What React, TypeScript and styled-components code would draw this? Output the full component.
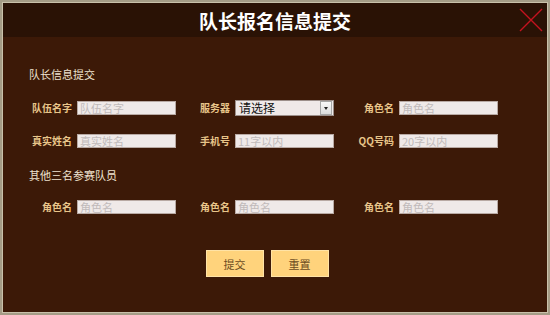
import styled, { createGlobalStyle } from "styled-components";

const GlobalStyle = createGlobalStyle`
  html, body {
    margin: 0;
    padding: 0;
    background: #a49c86;
    font-family: "Noto Sans CJK SC", "Liberation Sans", sans-serif;
  }
`;

const Page = styled.div`
  width: 550px;
  height: 315px;
  padding: 3px;
  box-sizing: border-box;
  background: #a49c86;
`;

const Modal = styled.div`
  width: 544px;
  height: 309px;
  background: #3c1907;
  box-shadow: 0 0 0 1px #c9c1aa;
  display: flex;
  flex-direction: column;
`;

const Header = styled.div`
  position: relative;
  height: 34px;
  background: #2a1205;
  display: flex;
  align-items: center;
  justify-content: center;
`;

const Title = styled.h1`
  margin: 0;
  padding-top: 2px;
  font-size: 19px;
  font-weight: bold;
  color: #ffffff;
  line-height: 32px;
`;

const Close = styled.button`
  position: absolute;
  right: 4px;
  top: 5px;
  width: 24px;
  height: 24px;
  padding: 0;
  border: none;
  background: transparent;
  cursor: pointer;
`;

const Body = styled.div`
  padding: 30px 0 0 17px;
  display: flex;
  flex-direction: column;
`;

const SectionTitle = styled.div<{ $top: number }>`
  margin-top: ${(p) => p.$top}px;
  padding-left: 9px;
  font-size: 11px;
  line-height: 14px;
  color: #efe3d0;
`;

const Row = styled.div<{ $top: number }>`
  margin-top: ${(p) => p.$top}px;
  display: grid;
  grid-template-columns: 57px 99px 59px 99px 65px 99px;
  align-items: center;
  height: 14px;
`;

const Label = styled.label`
  text-align: right;
  padding-right: 5px;
  font-size: 10px;
  font-weight: 600;
  line-height: 14px;
  color: #e8c58a;
  white-space: nowrap;
`;

const Input = styled.input`
  box-sizing: border-box;
  width: 99px;
  height: 14px;
  margin: 0;
  padding: 0 2px;
  border: 1px solid #b8a9a3;
  background: #efe9e8;
  font-family: inherit;
  font-size: 11px;
  color: #333;
  outline: none;
  &::placeholder {
    color: #c0baba;
  }
`;

const SelectBox = styled.div`
  box-sizing: border-box;
  width: 99px;
  height: 16px;
  border: 1px solid #9c8f8a;
  background: #efe9e8;
  display: flex;
  align-items: center;
  justify-content: space-between;
`;

const SelectText = styled.span`
  padding-left: 3px;
  font-size: 12px;
  line-height: 14px;
  color: #111;
`;

const SelectArrow = styled.span`
  width: 10px;
  height: 12px;
  margin-right: 1px;
  border: 1px solid #a6a6a6;
  background: linear-gradient(#f8f8f8, #dcdcdc);
  display: flex;
  align-items: center;
  justify-content: center;
  &::after {
    content: "";
    border-left: 2.5px solid transparent;
    border-right: 2.5px solid transparent;
    border-top: 3px solid #222;
  }
`;

const Buttons = styled.div`
  margin-top: 36px;
  padding-right: 33px;
  display: flex;
  justify-content: center;
  gap: 7px;
`;

const Button = styled.button`
  width: 58px;
  height: 27px;
  padding: 0;
  border: 1px solid #ffe3a6;
  background: #ffd37c;
  font-family: inherit;
  font-size: 11px;
  color: #6b4b1f;
  cursor: pointer;
`;

export default function App() {
  return (
    <>
      <GlobalStyle />
      <Page>
        <Modal>
          <Header>
            <Title>队长报名信息提交</Title>
            <Close aria-label="关闭">
              <svg width="24" height="24" viewBox="0 0 24 24">
                <path
                  d="M1 1 L23 23 M23 1 L1 23"
                  stroke="#c4131f"
                  strokeWidth="1.4"
                  fill="none"
                />
              </svg>
            </Close>
          </Header>
          <Body>
            <SectionTitle $top={0}>队长信息提交</SectionTitle>
            <Row $top={19}>
              <Label>队伍名字</Label>
              <Input placeholder="队伍名字" />
              <Label>服务器</Label>
              <SelectBox>
                <SelectText>请选择</SelectText>
                <SelectArrow />
              </SelectBox>
              <Label>角色名</Label>
              <Input placeholder="角色名" />
            </Row>
            <Row $top={20}>
              <Label>真实姓名</Label>
              <Input placeholder="真实姓名" />
              <Label>手机号</Label>
              <Input placeholder="11字以内" />
              <Label>QQ号码</Label>
              <Input placeholder="20字以内" />
            </Row>
            <SectionTitle $top={20}>其他三名参赛队员</SectionTitle>
            <Row $top={18}>
              <Label>角色名</Label>
              <Input placeholder="角色名" />
              <Label>角色名</Label>
              <Input placeholder="角色名" />
              <Label>角色名</Label>
              <Input placeholder="角色名" />
            </Row>
            <Buttons>
              <Button>提交</Button>
              <Button>重置</Button>
            </Buttons>
          </Body>
        </Modal>
      </Page>
    </>
  );
}
